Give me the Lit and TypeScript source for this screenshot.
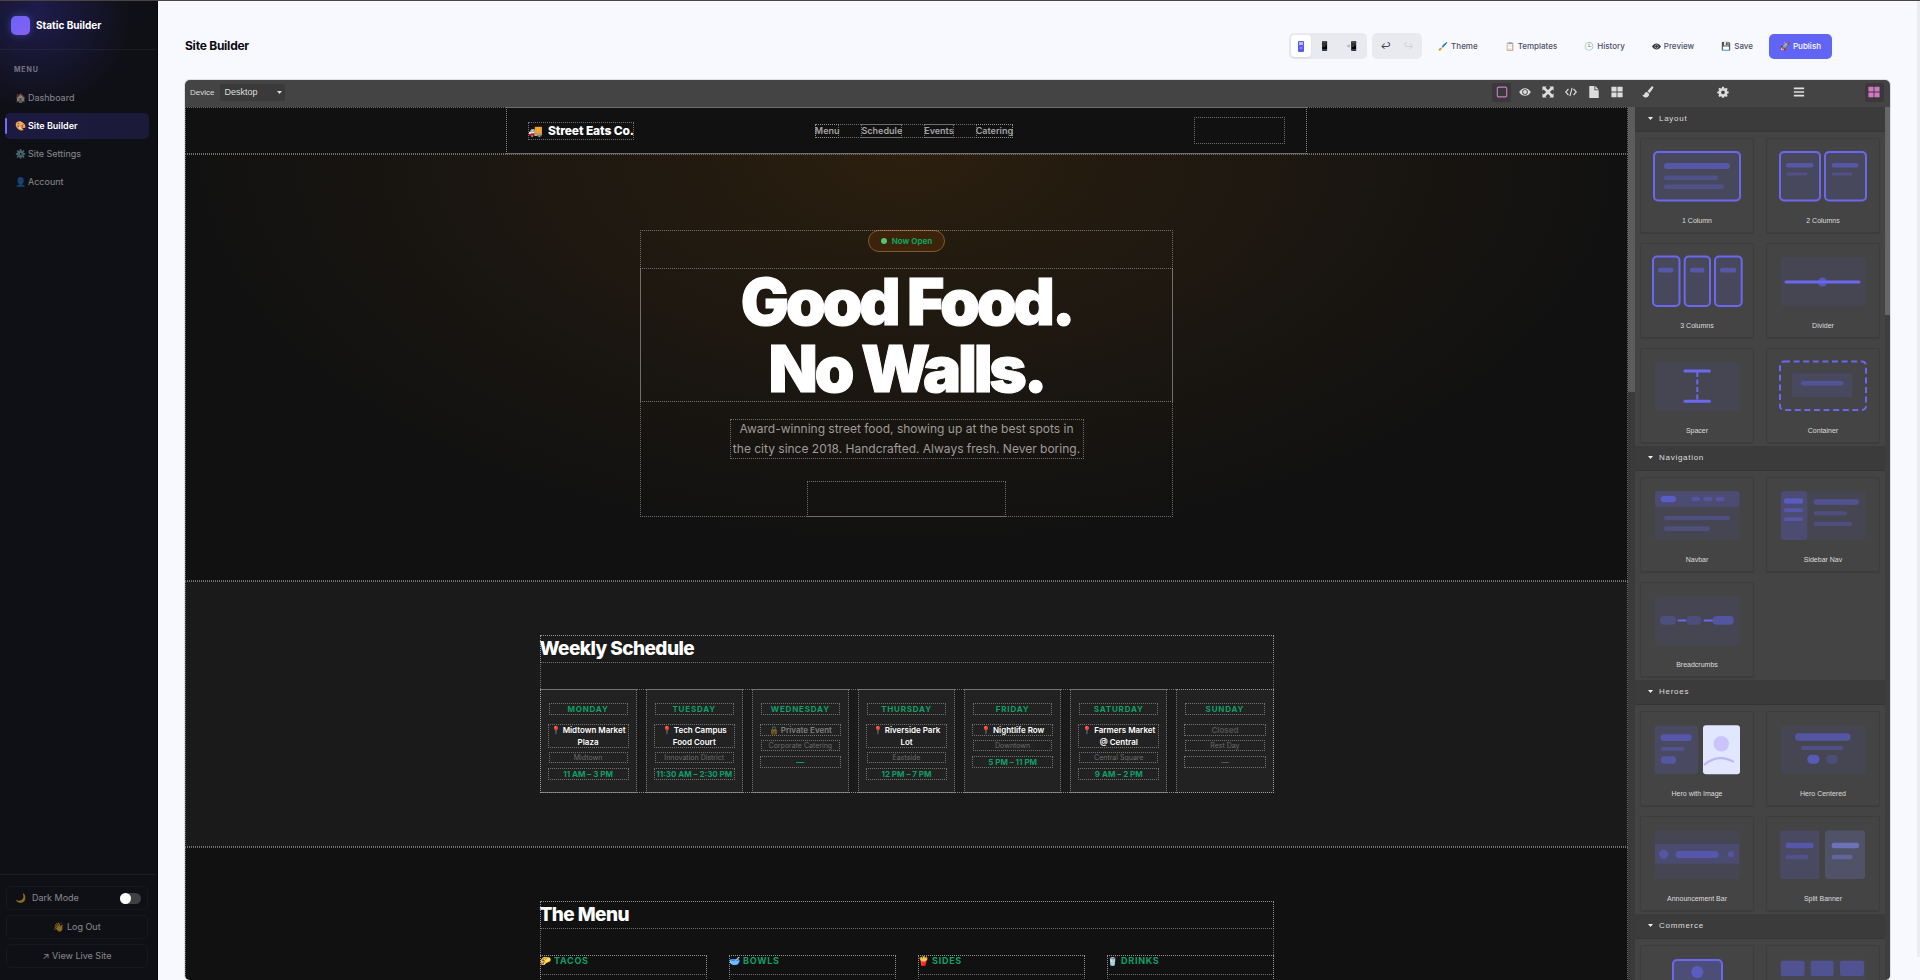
import { LitElement, html, css, svg, nothing } from "lit";
import { customElement, state } from "lit/decorators.js";
import { classMap } from "lit/directives/class-map.js";

const reset = css`
  *, *::before, *::after { box-sizing: border-box; }
  h1, h2, h3, p, ul { margin: 0; padding: 0; }
  ul { list-style: none; }
  button, select, input { font: inherit; color: inherit; border: 0; background: none; padding: 0; margin: 0; }
  button { cursor: pointer; }
  a { color: inherit; text-decoration: none; }
`;

/* ---------- Sidebar ---------- */
@customElement("builder-sidebar")
class BuilderSidebar extends LitElement {
  static styles = [reset, css`
    :host {
      display: flex; flex-direction: column; flex: none; width: 158px;
      color: rgba(255, 255, 255, .5); font-size: 9px; font-weight: 400; line-height: 14px;
      background: radial-gradient(circle at 36px 12px, rgba(67, 56, 202, .3), transparent 96px), #0f1016;
      border-right: 1px solid #050508;
    }
    .brand { display: flex; align-items: center; gap: 6px; height: 49px; padding: 0 11px; border-bottom: 1px solid rgba(255, 255, 255, .05); }
    .logo { width: 19px; height: 19px; border-radius: 5px; background: linear-gradient(135deg, #6c63f5, #8660f6); box-shadow: 0 0 9px rgba(99, 102, 241, .45); }
    .name { color: #fff; font-size: 10px; font-weight: 700; }
    .heading { padding: 13px 14px 8px; font-size: 7px; font-weight: 700; letter-spacing: .12em; color: rgba(255, 255, 255, .42); }
    .nav { display: flex; flex-direction: column; gap: 2px; padding: 0 8px 0 5px; }
    .link { position: relative; display: flex; align-items: center; gap: 2px; height: 26px; padding: 0 10px; border-radius: 5px; }
    .link.active { color: #fff; font-weight: 600; background: linear-gradient(90deg, #1d1a42, #1b1a38); }
    .link.active::before { content: ""; position: absolute; left: 0; top: 5px; bottom: 5px; width: 2px; border-radius: 2px; background: #7c6cf5; }
    .foot { display: flex; flex-direction: column; gap: 5px; margin-top: auto; padding: 11px 9px 12px 6px; border-top: 1px solid rgba(255, 255, 255, .05); }
    .box { display: flex; align-items: center; justify-content: center; height: 24px; border: 1px solid rgba(255, 255, 255, .035); border-radius: 5px; font-size: 9px; font-weight: 400; }
    .dark { justify-content: flex-start; gap: 6px; padding: 0 6px 0 8px; }
    .dark input { appearance: none; margin-left: auto; width: 21px; height: 11px; border-radius: 6px; background: #3f3f46; }
    .dark input::before { content: ""; display: block; width: 11px; height: 11px; border-radius: 50%; background: #fff; }
    .dark input:checked::before { margin-left: auto; }
  `];
  private items = [["🏠", "Dashboard"], ["🎨", "Site Builder"], ["⚙️", "Site Settings"], ["👤", "Account"]];
  render() {
    return html`
      <div class="brand"><span class="logo"></span><span class="name">Static Builder</span></div>
      <div class="heading">MENU</div>
      <nav class="nav">
        ${this.items.map(([icon, label], i) => html`
          <a href="#" class=${classMap({ link: true, active: i === 1 })}><span>${icon}</span><span>${label}</span></a>`)}
      </nav>
      <div class="foot">
        <label class="box dark" for="dark"><span>🌙</span><span>Dark Mode</span><input id="dark" type="checkbox" role="switch"></label>
        <button class="box">👋 Log Out</button>
        <a class="box" href="#">↗&#xFE0E; View Live Site</a>
      </div>`;
  }
}

/* ---------- Top action bar ---------- */
@customElement("builder-header")
class BuilderHeader extends LitElement {
  static styles = [reset, css`
    :host { display: flex; align-items: center; justify-content: space-between; height: 26px; padding-right: 58px; font-size: 8px; line-height: 12px; }
    h1 { font-size: 12px; font-weight: 700; letter-spacing: -.02em; color: #0b0b14; line-height: 16px; }
    .actions { display: flex; align-items: center; gap: 5px; }
    .group { display: flex; padding: 2px; height: 26px; border-radius: 5px; background: #e9eaf0; }
    .seg { display: grid; place-items: center; width: 23px; border-radius: 4px; color: #222; font-size: 9px; }
    .seg.active { width: 20px; background: #fff; color: #4f46e5; box-shadow: 0 1px 2px rgba(0, 0, 0, .08); }
    .seg.off { opacity: .15; }
    .seg.last { width: 27px; }
    .pc { width: 6px; height: 11px; }
    .act { display: flex; align-items: center; gap: 3px; height: 25px; padding: 0 11px; border-radius: 5px; color: #4b5068; font-weight: 500; }
    .act.primary { background: #6165f3; color: #fff; }
    .eye { display: block; width: 9px; height: 9px; fill: #33363f; }
  `];
  render() {
    const eye = html`<svg class="eye" viewBox="0 0 14 14"><path fill-rule="evenodd" d="M0 7C2 4 4.300 2.500 7 2.500S12 4 14 7C12 10 9.700 11.500 7 11.500S2 10 0 7zM7 4a3 3 0 100 6 3 3 0 000-6z"/><circle cx="7" cy="7" r="2.300"/></svg>`;
    const acts = [["🖌️", "Theme"], ["📋", "Templates"], ["🕒", "History"], [eye, "Preview"], ["💾", "Save"]];
    return html`
      <h1>Site Builder</h1>
      <div class="actions">
        <div class="group">
          <button class="seg active" aria-label="Desktop view">
            <svg class="pc" viewBox="0 0 6 11"><rect width="6" height="11" rx="1" fill="#5b5bef"/><rect x="1" y="1" width="4" height="3" fill="#b9bbfb"/><rect x="2" y="6" width="2" height="2" fill="#8f90f7"/></svg>
          </button>
          <button class="seg last" aria-label="Tablet view">📱</button>
          <button class="seg last" aria-label="Mobile view">📲</button>
        </div>
        <div class="group">
          <button class="seg" aria-label="Undo">↩</button>
          <button class="seg off" aria-label="Redo">↪</button>
        </div>
        ${acts.map(([i, l]) => html`<button class="act"><span>${i}</span><span>${l}</span></button>`)}
        <button class="act primary"><span>🚀</span><span>Publish</span></button>
      </div>`;
  }
}

/* ---------- Site preview canvas ---------- */
const days = [
  { day: "Monday", place: "📍 Midtown Market Plaza", area: "Midtown", time: "11 AM – 3 PM" },
  { day: "Tuesday", place: "📍 Tech Campus Food Court", area: "Innovation District", time: "11:30 AM – 2:30 PM" },
  { day: "Wednesday", place: "🔒 Private Event", area: "Corporate Catering", time: "—", muted: true },
  { day: "Thursday", place: "📍 Riverside Park Lot", area: "Eastside", time: "12 PM – 7 PM" },
  { day: "Friday", place: "📍 Nightlife Row", area: "Downtown", time: "5 PM – 11 PM" },
  { day: "Saturday", place: "📍 Farmers Market @ Central", area: "Central Square", time: "9 AM – 2 PM" },
  { day: "Sunday", place: "Closed", area: "Rest Day", time: "—", closed: true },
];

@customElement("site-canvas")
class SiteCanvas extends LitElement {
  static styles = [reset, css`
    :host { display: block; flex: 1; min-width: 0; overflow: hidden; background: #111; color: #fff; font-family: Inter, "Noto Sans", sans-serif; }
    .o { outline: 1px dotted rgba(170, 170, 170, .6); outline-offset: -1px; }
    .bar { display: flex; justify-content: center; height: 47px; }
    .inner { display: flex; align-items: center; justify-content: space-between; width: 801px; padding: 0 21px; border-inline: 1px dotted #4a4a4a; }
    .brand { display: flex; align-items: center; gap: 5px; height: 18px; font-size: 12px; font-weight: 800; letter-spacing: -.01em; }
    .links { display: flex; gap: 22px; font-size: 9px; font-weight: 600; line-height: 14px; color: #a3a3a3; }
    .cta { width: 91px; height: 27px; }
    .hero { padding: 76px 0 64px; background: radial-gradient(ellipse 50% 92% at 50% 0, #2b1f0e, #221a10 32%, #111 100%); }
    .heroIn { display: flex; flex-direction: column; align-items: center; width: 533px; margin: 0 auto; text-align: center; }
    .badge { display: flex; align-items: center; gap: 5px; height: 22px; padding: 0 12px; border: 1px solid #84592a; border-radius: 11px; background: #3b230c; color: #10a35f; font-size: 8px; font-weight: 700; }
    .badge::before { content: ""; width: 6px; height: 6px; border-radius: 50%; background: #4cc96a; }
    .title { width: 100%; margin: 16px 0 17px; font-size: 64px; line-height: 67px; font-weight: 900; letter-spacing: -.05em; -webkit-text-stroke: 1px #fff; }
    .lead { width: 354px; margin-bottom: 22px; font-size: 12px; line-height: 20px; color: #9f9b97; }
    .go { display: grid; place-items: center; width: 199px; height: 36px; color: #161412; font-size: 10px; font-weight: 700; }
    .section { padding: 54px 0; }
    .alt { background: #1a1a1a; }
    .wrap { width: 734px; margin: 0 auto; }
    h2 { height: 28px; margin-bottom: 26px; font-size: 19px; line-height: 27px; font-weight: 800; letter-spacing: -.03em; }
    .week { display: grid; grid-template-columns: repeat(7, minmax(0, 1fr)); gap: 9px; }
    .card { padding: 14px 9px 13px; background: #222; text-align: center; font-size: 8px; line-height: 12px; }
    .day { margin-bottom: 9px; color: #0f9f68; font-weight: 700; letter-spacing: .1em; text-transform: uppercase; }
    .place { margin-bottom: 4px; font-weight: 600; margin-inline: -1px; }
    .area { margin-bottom: 5px; font-size: 7px; line-height: 11px; color: #6b6b6b; white-space: nowrap; }
    .time { color: #0f9f68; font-weight: 700; white-space: nowrap; margin-inline: -1px; }
    .muted .place { color: rgba(255, 255, 255, .42); }
    .closed .place, .closed .time { color: #555; }
    .menu { display: grid; grid-template-columns: repeat(4, minmax(0, 1fr)); gap: 22px; }
    .col { height: 120px; }
    .col h3 { height: 20px; font-size: 9px; line-height: 12px; font-weight: 700; letter-spacing: .08em; color: #0f9f68; white-space: nowrap; }
  `];
  render() {
    return html`
      <header class="bar o">
        <div class="inner o">
          <div class="brand o"><span>🚚</span><span>Street Eats Co.</span></div>
          <nav class="links o">${["Menu", "Schedule", "Events", "Catering"].map(l => html`<a class="o" href="#">${l}</a>`)}</nav>
          <a class="cta o" href="#" aria-label="Find us"></a>
        </div>
      </header>
      <section class="hero o">
        <div class="heroIn o">
          <div class="badge">Now Open</div>
          <h1 class="title o">Good Food.<br>No Walls.</h1>
          <p class="lead o">Award-winning street food, showing up at the best spots in the city since 2018. Handcrafted. Always fresh. Never boring.</p>
          <a class="go o" href="#">See This Week's Schedule ↓</a>
        </div>
      </section>
      <section class="section alt o">
        <div class="wrap o">
          <h2 class="o">Weekly Schedule</h2>
          <div class="week o">
            ${days.map(d => html`
              <div class=${classMap({ card: true, o: true, muted: !!d.muted, closed: !!d.closed })}>
                <div class="day o">${d.day}</div><div class="place o">${d.place}</div>
                <div class="area o">${d.area}</div><div class="time o">${d.time}</div>
              </div>`)}
          </div>
        </div>
      </section>
      <section class="section o">
        <div class="wrap o">
          <h2 class="o">The Menu</h2>
          <div class="menu">
            ${["🌮 TACOS", "🥣 BOWLS", "🍟 SIDES", "🥤 DRINKS"].map(t => html`<div class="col o"><h3 class="o">${t}</h3></div>`)}
          </div>
        </div>
      </section>`;
  }
}

/* ---------- Block thumbnails (90 x 54 artboard) ---------- */
const C = "#6366f1";
const r = (x: number, y: number, x2: number, y2: number, o = .5, rx = 2, fill = C) =>
  svg`<rect x=${x} y=${y} width=${x2 - x} height=${y2 - y} rx=${rx} fill=${fill} fill-opacity=${o}/>`;
const frame = (x: number, y: number, x2: number, y2: number, dash = "", o = .15) =>
  svg`<rect x=${x} y=${y} width=${x2 - x} height=${y2 - y} rx="4" fill=${C} fill-opacity=${o} stroke="#6c68ee" stroke-width="2" stroke-dasharray=${dash || nothing}/>`;
const ln = (x: number, y: number, x2: number, y2: number, w = 3, dash = "") =>
  svg`<line x1=${x} y1=${y} x2=${x2} y2=${y2} stroke="#6c68ee" stroke-width=${w} stroke-linecap=${dash ? "butt" : "round"} stroke-dasharray=${dash || nothing}/>`;
const dot = (x: number, y: number, rad: number, o = .5, fill = C) => svg`<circle cx=${x} cy=${y} r=${rad} fill=${fill} fill-opacity=${o}/>`;
const bg = () => r(3, 2.5, 87.5, 51, .09, 3);

const categories = [
  { name: "Layout", blocks: [
    { name: "1 Column", art: [frame(2, 2, 88, 50.5), r(12, 13, 78, 19, .5, 3), r(12, 25.5, 66, 30, .3), r(12, 34.5, 72, 39, .3)] },
    { name: "2 Columns", art: [frame(2, 2, 42, 50.5), frame(47, 2, 88, 50.5), r(8, 13, 35.5, 17.5, .5), r(8, 22.5, 29.5, 25.5, .3), r(53.7, 13, 80.5, 17.5, .5), r(53.7, 22.5, 74.5, 25.5, .3)] },
    { name: "3 Columns", art: [frame(1, 1.5, 27.5, 51), frame(32.7, 1.5, 58, 51), frame(63, 1.5, 89.7, 51), r(6, 12.7, 21.5, 17.5, .5), r(38, 12.7, 52.5, 17.5, .5), r(68, 12.7, 84.3, 17.5, .5)] },
    { name: "Divider", art: [bg(), ln(8, 27, 81, 27), dot(44.5, 27, 4.6, .6)] },
    { name: "Spacer", art: [bg(), ln(33, 11, 57.5, 11), ln(33, 41.3, 57.5, 41.3), ln(45.3, 12, 45.3, 40, 2, "5 2.5")] },
    { name: "Container", art: [frame(2, 1.5, 88, 50, "6 3.6", .03), r(14, 13.3, 74.5, 37.5, .13), r(23, 21, 65.5, 25.5, .4)] },
  ] },
  { name: "Navigation", blocks: [
    { name: "Navbar", art: [bg(), r(3, 2, 87.5, 17.7, .2, 3), r(8.7, 7, 24, 13.3, .65, 3), r(39.7, 7.7, 48, 12.3, .35), r(51.3, 7.7, 60.3, 12.3, .35), r(63.7, 7.7, 72.3, 12.3, .35), r(12, 27, 78, 31, .3), r(12, 37.3, 58, 42, .27)] },
    { name: "Sidebar Nav", art: [bg(), r(3, 2, 29.3, 51, .2, 3), r(6, 9.3, 25, 14.7, .6), r(6, 19.3, 25, 23, .45), r(6, 28.3, 25, 32, .4), r(35.7, 10.3, 80.7, 15.7, .38), r(35.7, 22.3, 68.7, 26.3, .27), r(35.7, 32.7, 74, 37, .27)] },
    { name: "Breadcrumbs", art: [bg(), r(8, 22, 24, 30.7, .27, 4), ln(26.5, 26.5, 33.5, 26.5, 2), r(34.7, 22, 49.3, 30.7, .25, 4), ln(52.5, 26.5, 60, 26.5, 2), r(60.7, 22, 81.7, 30.7, .48, 4)] },
  ] },
  { name: "Heroes", blocks: [
    { name: "Hero with Image", art: [r(2.7, 2.5, 46, 51, .17, 3), r(8.7, 11.3, 39.7, 18, .5, 3), r(8.7, 24, 32.5, 27.7, .35), r(8.7, 33.3, 24, 40.7, .45, 3.5), r(51, 2.3, 88, 51.3, 1, 3, "#e0e7ff"), dot(69.3, 20.7, 7.7, 1, "#c9c5fc"), svg`<path d="M52 42q14-12 30-3" fill="none" stroke="#bcb6f5" stroke-width="2"/>`] },
    { name: "Hero Centered", art: [bg(), r(17.3, 10.3, 72.3, 17.7, .5, 3), r(23, 23, 65.3, 27, .32), r(29.3, 31.7, 41.5, 40.7, .65, 4.5), r(48, 31.7, 59.8, 40.7, .24, 4.5)] },
    { name: "Announcement Bar", art: [bg(), r(3, 16, 87.5, 35.7, .18, 0), dot(11.7, 26.3, 4.6, .4), r(23.7, 23, 66.7, 30, .45, 3), dot(79, 26.3, 3, .35)] },
    { name: "Split Banner", art: [r(2, 2.5, 41.5, 51, .17, 3), r(47, 2.5, 87, 51, .2, 3, "#818cf8"), r(7.7, 14.7, 35.5, 20.3, .5), r(7.7, 26.7, 30, 31.3, .3), r(53.7, 14.7, 81, 20.3, .55, 2, "#818cf8"), r(53.7, 26.7, 74.5, 31.3, .35, 2, "#818cf8")] },
  ] },
  { name: "Commerce", blocks: [
    { name: "Product Card", art: [frame(21, 3, 70, 52, "", .3), dot(45.3, 15, 6, .6)] },
    { name: "Product Grid", art: [r(2.7, 3.7, 26.5, 19, .4), r(32.7, 3.7, 55.5, 19, .4), r(62, 3.7, 86, 19, .4), bg()] },
  ] },
];

@customElement("block-panel")
class BlockPanel extends LitElement {
  static styles = [reset, css`
    :host { display: block; width: 250px; overflow: hidden; background: #444; color: #ddd; font-family: "Liberation Sans", Arial, sans-serif; }
    .cat { display: flex; align-items: center; gap: 6px; width: 100%; height: 25px; padding: 0 0 1px 13px; background: #3b3b3b; border-bottom: 1px solid #353535; font-size: 8px; letter-spacing: .09em; }
    .cat svg { width: 5px; height: 3px; fill: #eee; }
    .grid { display: grid; grid-template-columns: repeat(2, minmax(0, 1fr)); gap: 10px 12px; padding: 6px 5px 3px; }
    .block { display: flex; flex-direction: column; align-items: center; height: 95px; padding-top: 11px; border: 1px solid #3d3d3d; border-radius: 2px; box-shadow: 0 1px 1px rgba(0, 0, 0, .12); font-size: 7px; line-height: 10px; cursor: grab; }
    .art { width: 90px; height: 54px; margin-bottom: 12px; overflow: visible; }
  `];
  render() {
    return categories.map(c => html`
      <button class="cat" aria-expanded="true"><svg viewBox="0 0 5 3"><path d="M0 0h5L2.500 3z"/></svg>${c.name}</button>
      <div class="grid">
        ${c.blocks.map(b => html`<div class="block"><svg class="art" viewBox="0 0 90 54">${b.art}</svg>${b.name}</div>`)}
      </div>`);
  }
}

/* ---------- Toolbar icons ---------- */
const icons = {
  square: svg`<rect x="1.500" y="1.300" width="11" height="11.400" rx="1.500" fill="none" stroke="currentColor" stroke-width="1.300"/>`,
  eye: svg`<path fill-rule="evenodd" d="M.2 7C2 4 4.300 2.500 7 2.500S12 4 13.800 7C12 10 9.700 11.500 7 11.500S2 10 .2 7zM7 3.700a3.300 3.300 0 100 6.600 3.300 3.300 0 000-6.600z"/><circle cx="7" cy="7" r="2.300"/>`,
  expand: svg`<path d="M.5.5h5L4.100 1.900 7 4.800l2.900-2.900L8.500.5h5v5l-1.400-1.400L9.200 7l2.900 2.900 1.400-1.400v5h-5l1.400-1.400L7 9.200l-2.900 2.900 1.400 1.400h-5v-5l1.400 1.400L4.800 7 1.900 4.100.5 5.500z"/>`,
  code: svg`<path d="M4 3.500L.8 7 4 10.500M10 3.500L13.200 7 10 10.500M8.300 2.300L5.700 11.700" fill="none" stroke="currentColor" stroke-width="1.300"/>`,
  file: svg`<path d="M1.500 0h6v5H12.500V14h-11zM8.500 0l4 4h-4z"/>`,
  grid: svg`<path d="M.5 1h6v5.500h-6zM7.500 1h6v5.500h-6zM.5 7.500h6V13h-6zM7.500 7.500h6V13h-6z"/>`,
  brush: svg`<path d="M12.800.6c.7.500.5 1.200.1 1.900L9 8.300 6.300 6.200 11 1c.6-.600 1.200-.800 1.800-.4zM5.600 7l2.700 2.100c.2 2.300-1.300 4.300-4 4.300C2 13.400.8 12 .6 10c1.300.8 2 .3 2.300-.8C3.300 7.800 4.200 7 5.600 7z"/>`,
  gear: svg`<path fill-rule="evenodd" d="M5.900.8h2.200l.3 1.700 1.100.5L11 2l1.500 1.600-1 1.400.4 1.100 1.700.3v2.200l-1.700.3-.4 1.100 1 1.400L11 12.900l-1.500-1-1.100.5-.3 1.300H5.900l-.3-1.300-1.100-.5-1.500 1L1.500 11.400l1-1.400-.4-1.100L.4 8.600V6.400l1.700-.3L2.500 5l-1-1.400L3 2l1.500 1 1.100-.5zM7 5.200a2.200 2.200 0 100 4.400 2.200 2.200 0 000-4.400z"/>`,
  bars: svg`<path d="M1 1.700h12v2H1zM1 6h12v2H1zM1 10.300h12v2H1z"/>`,
};
const icon = (k: keyof typeof icons) => html`<svg class="ico" viewBox="0 0 14 14">${icons[k]}</svg>`;

@customElement("app-root")
class AppRoot extends LitElement {
  @state() private device = "Desktop";
  static styles = [reset, css`
    :host { display: flex; height: 100vh; overflow: hidden; border-top: 1px solid #4a4341; box-sizing: border-box; background: #f8f9ff; font-family: Inter, "Noto Sans", sans-serif; }
    .main { display: flex; flex-direction: column; gap: 21px; flex: 1; min-width: 0; padding: 32px 27px 0 27px; }
    .rail { flex: none; width: 3px; margin-bottom: 23px; background: #ebecf2; }
    .editor { display: flex; flex-direction: column; flex: 1; min-height: 0; border-radius: 5px; overflow: hidden; background: #444; box-shadow: 0 0 0 1px rgba(40, 40, 50, .12); }
    .tools { display: flex; flex: none; height: 27px; color: #ddd; font-family: "Liberation Sans", Arial, sans-serif; }
    .left { display: flex; align-items: center; flex: 1; padding: 0 0 3px 5px; font-size: 8px; }
    .pick { display: flex; align-items: center; margin-left: 6px; background: #3a3a3a; border-radius: 2px; }
    select { appearance: none; width: 57px; height: 17px; padding-left: 4px; font-size: 9px; line-height: 17px; }
    .caret { width: 5px; height: 3px; margin-right: 3px; fill: #ddd; }
    .icons { display: flex; gap: 4px; margin-left: auto; padding-right: 9px; }
    .tool { display: grid; place-items: center; width: 19px; height: 19px; border-radius: 2px; }
    .tool.on { background: #393939; color: #d278c9; }
    .ico { width: 12px; height: 12px; fill: currentColor; }
    .tabs { display: flex; align-items: center; justify-content: space-between; width: 250px; padding: 0 1px 3px 3px; margin-right: 5px; }
    .body { display: flex; flex: 1; min-height: 0; }
    .track { flex: none; width: 7px; background: #3a3a3a; }
    .thumb { height: 285px; background: #5c5c5c; }
    .side { width: 5px; background: #3e3e3e; }
    .side .thumb { height: 208px; background: #666; }
  `];
  render() {
    const t = (k: keyof typeof icons, label: string, on = false) =>
      html`<button class=${classMap({ tool: true, on })} aria-label=${label}>${icon(k)}</button>`;
    return html`
      <builder-sidebar></builder-sidebar>
      <main class="main">
        <builder-header></builder-header>
        <div class="editor">
          <div class="tools">
            <div class="left">
              <label for="device">Device</label>
              <div class="pick">
                <select id="device" .value=${this.device} @change=${(e: Event) => (this.device = (e.target as HTMLSelectElement).value)}>
                  <option>Desktop</option><option>Tablet</option><option>Mobile</option>
                </select>
                <svg class="caret" viewBox="0 0 5 3"><path d="M0 0h5L2.500 3z"/></svg>
              </div>
              <div class="icons">
                ${t("square", "Outlines", true)}${t("eye", "Preview")}${t("expand", "Fullscreen")}${t("code", "View code")}${t("file", "Pages")}${t("grid", "Blocks")}
              </div>
            </div>
            <div class="tabs">${t("brush", "Styles")}${t("gear", "Settings")}${t("bars", "Layers")}${t("grid", "Blocks", true)}</div>
          </div>
          <div class="body">
            <site-canvas></site-canvas>
            <div class="track"><div class="thumb"></div></div>
            <block-panel></block-panel>
            <div class="track side"><div class="thumb"></div></div>
          </div>
        </div>
      </main>
      <div class="rail"></div>`;
  }
}
